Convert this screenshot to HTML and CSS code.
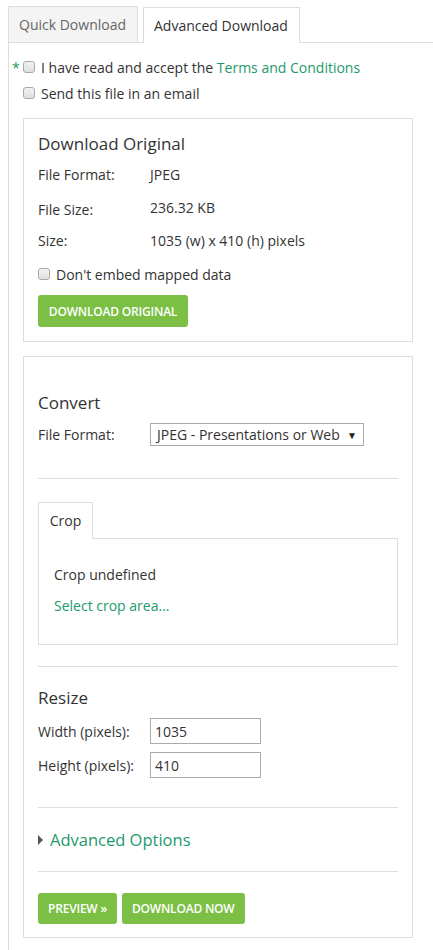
FILE: index.html
```html
<!DOCTYPE html>
<html lang="en">
<head>
    <meta charset="UTF-8">
    <meta name="viewport" content="width=device-width, initial-scale=1.0">
    <title>Download</title>
    <link rel="stylesheet" href="styles.css">
</head>
<body>

<div class="tabs">
    <div class="tab">Quick Download</div>
    <div class="tab active">Advanced Download</div>
</div>

<div class="panel">
    <div class="check-row">
        <span class="req">*</span>
        <input type="checkbox" id="terms">
        <label for="terms">I have read and accept the <a href="#">Terms and Conditions</a></label>
    </div>
    <div class="check-row">
        <input type="checkbox" id="email">
        <label for="email">Send this file in an email</label>
    </div>

    <div class="box original">
        <h3>Download Original</h3>
        <div class="info-row"><span class="key">File Format:</span><span>JPEG</span></div>
        <div class="info-row"><span class="key low">File Size:</span><span>236.32 KB</span></div>
        <div class="info-row"><span class="key">Size:</span><span>1035 (w) x 410 (h) pixels</span></div>
        <div class="check-row small">
            <input type="checkbox" id="embed">
            <label for="embed">Don't embed mapped data</label>
        </div>
        <button class="btn">Download Original</button>
    </div>

    <div class="box convert">
        <h3>Convert</h3>
        <div class="field-row">
            <label class="key" for="format">File Format:</label>
            <div class="select" id="format">
                <span>JPEG - Presentations or Web</span>
                <span class="arrow">&#9660;</span>
            </div>
        </div>

        <hr class="after-format">

        <div class="subtabs">
            <div class="subtab">Crop</div>
        </div>
        <div class="crop-panel">
            <p>Crop undefined</p>
            <a href="#">Select crop area...</a>
        </div>

        <hr class="after-crop">

        <h3>Resize</h3>
        <div class="resize">
            <div class="field-row">
                <label class="key" for="w">Width (pixels):</label>
                <input type="text" id="w" value="1035">
            </div>
            <div class="field-row">
                <label class="key" for="h">Height (pixels):</label>
                <input type="text" id="h" value="410">
            </div>
        </div>

        <hr class="after-resize">

        <div class="adv">
            <span class="tri"></span>
            <a href="#">Advanced Options</a>
        </div>

        <hr class="after-adv">

        <div class="actions">
            <button class="btn">Preview &raquo;</button>
            <button class="btn">Download Now</button>
        </div>
    </div>
</div>

</body>
</html>
```

FILE: styles.css
```css
body {
    font-family: "Open Sans", "Noto Sans", sans-serif;
    font-size: 14px;
    color: #333;
    background-color: #fff;
    margin: 0;
    padding: 0;
}
a {
    color: #1c9a6c;
    text-decoration: none;
}
.tabs {
    display: flex;
    margin-left: 8px;
    padding-top: 6px;
}
.tab {
    height: 35px;
    line-height: 35px;
    padding: 0 10px;
    background-color: #f4f4f4;
    border: 1px solid #ddd;
    border-bottom: none;
    color: #666;
    width: 108px;
}
.tab.active {
    background-color: #fff;
    color: #333;
    margin-left: 5px;
    width: 135px;
    position: relative;
    top: 1px;
}
.panel {
    margin-left: 8px;
    border-left: 1px solid #ddd;
    border-top: 1px solid #ddd;
    padding: 11px 0 12px 14px;
}
.check-row {
    display: flex;
    align-items: center;
    height: 26px;
}
.check-row label {
    margin-left: 6px;
}
.req {
    color: #1c9a6c;
    width: 11px;
    margin-left: -11px;
}
input[type="checkbox"] {
    -webkit-appearance: none;
    appearance: none;
    width: 12px;
    height: 12px;
    margin: 0;
    border: 1px solid #aaa;
    border-radius: 3px;
    background: linear-gradient(#f3f3f3, #dedede);
}
.box {
    width: 360px;
    border: 1px solid #ddd;
    padding: 0 14px;
}
.original {
    margin-top: 12px;
    padding-top: 13px;
    padding-bottom: 14px;
}
h3 {
    font-size: 17px;
    font-weight: normal;
    margin: 0;
    line-height: 24px;
    color: #333;
}
.info-row {
    display: flex;
    height: 33px;
    align-items: center;
}
.info-row:nth-of-type(1) {
    margin-top: 2px;
}
.key {
    width: 112px;
    flex-shrink: 0;
}
.key.low {
    position: relative;
    top: 2px;
}
.check-row.small {
    margin-top: 4px;
}
.btn {
    font-family: "Open Sans", sans-serif;
    font-size: 12px;
    font-weight: 600;
    letter-spacing: -0.2px;
    white-space: nowrap;
    text-transform: uppercase;
    color: #fff;
    background-color: #7bbf44;
    border: none;
    border-radius: 3px;
    height: 32px;
    padding: 0 10px;
    cursor: pointer;
}
.original .btn {
    margin-top: 8px;
    width: 150px;
    padding: 0;
    display: block;
}
.convert {
    margin-top: 14px;
    padding-top: 34px;
    padding-bottom: 13px;
}
.field-row {
    display: flex;
    align-items: center;
    margin-top: 8px;
}
.select {
    display: flex;
    justify-content: space-between;
    align-items: center;
    width: 200px;
    height: 21px;
    padding: 0 6px;
    border: 1px solid #aaa;
    font-size: 14px;
}
.arrow {
    font-size: 10px;
    color: #222;
}
hr {
    border: none;
    border-top: 1px solid #ddd;
    margin: 0;
}
hr.after-format {
    margin: 32px 0 22px;
}
.subtabs {
    display: flex;
}
.subtab {
    width: 53px;
    height: 36px;
    line-height: 36px;
    text-align: center;
    border: 1px solid #ddd;
    border-bottom: none;
    position: relative;
    top: 1px;
    background-color: #fff;
}
.crop-panel {
    border: 1px solid #ddd;
    padding: 26px 15px 29px;
}
.crop-panel p {
    margin: 0 0 12px;
}
hr.after-crop {
    margin: 21px 0 19px;
}
.resize .field-row:first-child {
    margin-top: 8px;
}
input[type="text"] {
    width: 111px;
    height: 26px;
    box-sizing: border-box;
    border: 1px solid #aaa;
    padding: 0 4px;
    font-family: "Open Sans", sans-serif;
    font-size: 14px;
    color: #333;
    margin: 0;
}
hr.after-resize {
    margin: 29px 0 20px;
}
.adv {
    display: flex;
    align-items: center;
    font-size: 16.5px;
}
.tri {
    width: 0;
    height: 0;
    border-top: 5px solid transparent;
    border-bottom: 5px solid transparent;
    border-left: 5px solid #555;
    margin-right: 7px;
}
hr.after-adv {
    margin: 20px 0 21px;
}
.actions {
    display: flex;
    gap: 5px;
}
.actions .btn {
    height: 31px;
}
```
